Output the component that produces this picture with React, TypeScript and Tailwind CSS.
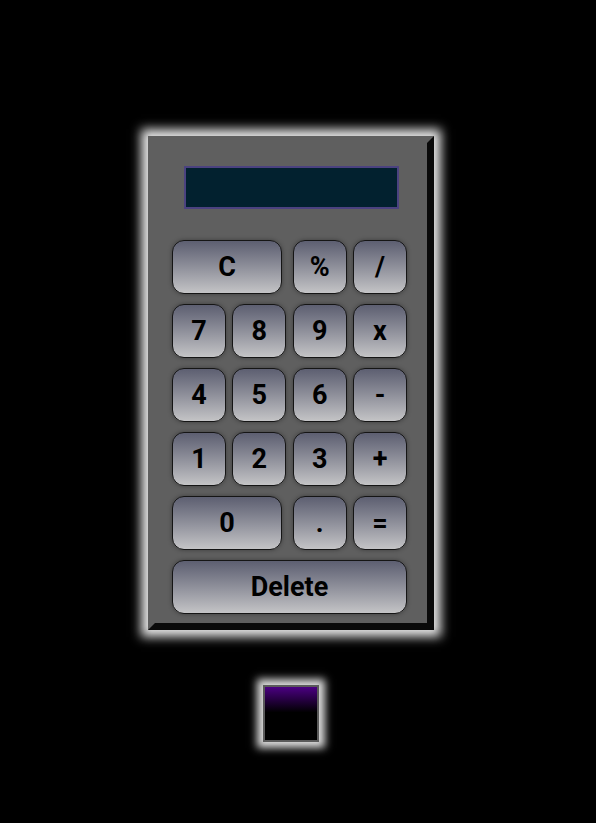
import React from 'react';

const keyClass =
  'flex items-center justify-center h-[54px] rounded-[12px] border border-[#151515] bg-gradient-to-b from-[#5d5f71] to-[#c4c4c6] text-black text-[27px] font-bold leading-none shadow-[0_0_4px_rgba(0,0,0,0.35)]';

export default function App() {
  const rows: string[][] = [
    ['7', '8', '9', 'x'],
    ['4', '5', '6', '-'],
    ['1', '2', '3', '+'],
  ];

  return (
    <div
      className="min-h-screen bg-black"
      style={{ fontFamily: 'Roboto, "Liberation Sans", sans-serif' }}
    >
      <div className="w-[582px] flex flex-col items-center pt-[136px]">
        {/* calculator body */}
        <div className="w-[286px] h-[494px] bg-[#5f5f5f] border-[7px] border-t-[#5f5f5f] border-l-[#5f5f5f] border-r-[#0a0a0a] border-b-[#0a0a0a] shadow-[0_0_10px_7px_#e4e4e4]">
          <div className="flex justify-center pt-[23px]">
            <div className="w-[215px] h-[43px] bg-[#02212f] border-2 border-[#4b4280]" />
          </div>

          <div className="ml-[17px] mt-[31px] w-[236px] grid grid-cols-[54px_54px_54px_54px] gap-x-[6.33px] gap-y-[10px]">
            <button className={`${keyClass} col-span-2 w-[110px]`}>C</button>
            <button className={keyClass}>%</button>
            <button className={keyClass}>/</button>

            {rows.map((row) =>
              row.map((k) => (
                <button key={k} className={keyClass}>
                  {k}
                </button>
              ))
            )}

            <button className={`${keyClass} col-span-2 w-[110px]`}>0</button>
            <button className={keyClass}>.</button>
            <button className={keyClass}>=</button>

            <button className={`${keyClass} col-span-4`}>Delete</button>
          </div>
        </div>

        {/* theme swatch */}
        <div className="mt-[55px] w-[56px] h-[57px] border-2 border-[#5a5a5a] bg-[linear-gradient(to_bottom,#4b0082_0%,#000_48%,#000_100%)] shadow-[0_0_8px_6px_#dcdcdc]" />
      </div>
    </div>
  );
}
